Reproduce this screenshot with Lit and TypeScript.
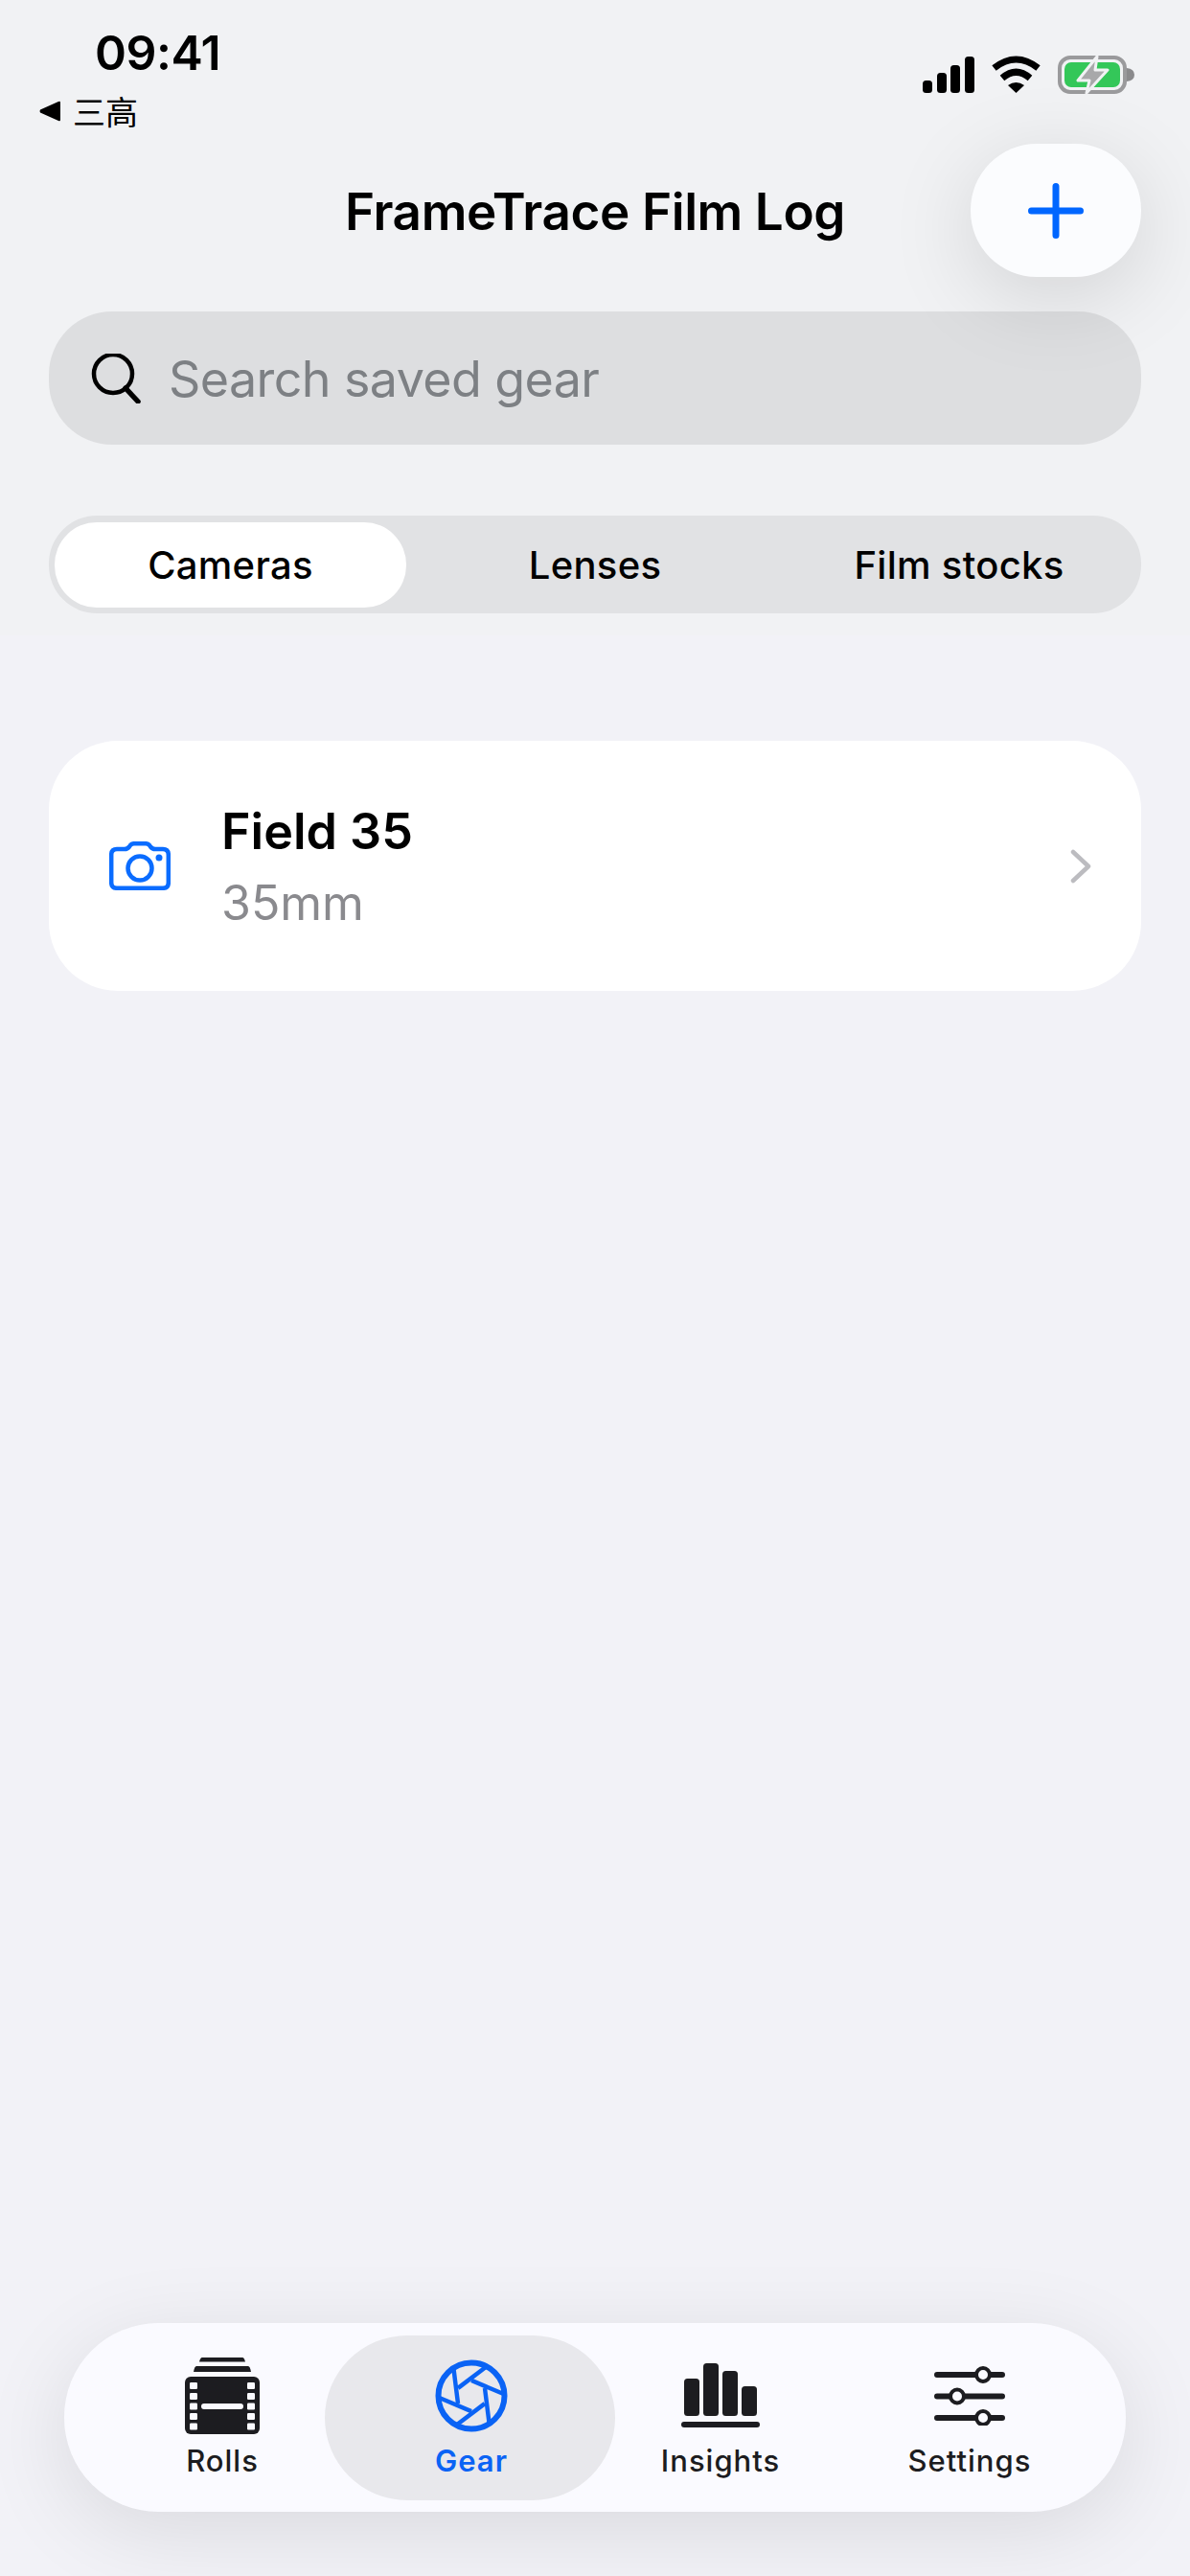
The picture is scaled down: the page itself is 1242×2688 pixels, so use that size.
import { LitElement, html, svg, css } from "lit";
import { customElement } from "lit/decorators.js";

const rollsIcon = html`
  <svg width="78" height="80" viewBox="0 0 78 80">
    <path d="M18 0 H60 Q62 0 63 4.500 H15 Q16 0 18 0 Z" fill="#1c1c20" />
    <path d="M12 9 H66 Q68 9 69 15 H9 Q10 9 12 9 Z" fill="#1c1c20" />
    <rect x="0" y="20" width="78" height="60" rx="6" fill="#1c1c20" />
    ${[26, 37, 47.5, 58, 68.5].map(
      (y) => svg`
        <rect x="5" y="${y}" width="8" height="7" rx="1.2" fill="#fafaff" />
        <rect x="65" y="${y}" width="8" height="7" rx="1.2" fill="#fafaff" />
      `
    )}
    <rect x="17" y="48" width="44" height="6" rx="3" fill="#fafaff" />
  </svg>
`;

const gearIcon = html`
  <svg width="76" height="76" viewBox="-38 -38 76 76" fill="none" stroke="#0a63f5">
    <circle r="34.500" stroke-width="6" />
    ${[0, 60, 120, 180, 240, 300].map(
      (a) => svg`
        <line x1="-18.500" y1="-28" x2="-14" y2="8" stroke-width="4.500" transform="rotate(${a})" />
      `
    )}
  </svg>
`;

const insightsIcon = html`
  <svg width="82" height="67" viewBox="0 0 82 67" fill="#1c1c20">
    <rect x="3" y="16" width="16" height="39" rx="3.500" />
    <rect x="23" y="0" width="16" height="55" rx="3.500" />
    <rect x="43" y="8" width="16" height="47" rx="3.500" />
    <rect x="63" y="24" width="16" height="31" rx="3.500" />
    <rect x="0" y="61" width="82" height="6" rx="3" />
  </svg>
`;

const settingsIcon = html`
  <svg width="74" height="62" viewBox="0 0 74 62" fill="none" stroke="#1c1c20" stroke-linecap="round">
    <path d="M3 9 H71 M3 31.500 H71 M3 54 H71" stroke-width="6" />
    <circle cx="51" cy="9" r="7" stroke-width="4" fill="#fafaff" />
    <circle cx="24" cy="31.500" r="7" stroke-width="4" fill="#fafaff" />
    <circle cx="51" cy="54" r="7" stroke-width="4" fill="#fafaff" />
  </svg>
`;

const tabs = [
  { label: "Rolls", icon: rollsIcon },
  { label: "Gear", icon: gearIcon, active: true },
  { label: "Insights", icon: insightsIcon },
  { label: "Settings", icon: settingsIcon },
];

@customElement("app-root")
export class AppRoot extends LitElement {
  static styles = css`
    :host {
      display: block;
      font-family: Inter, "Noto Sans CJK SC", sans-serif;
      color: #000;
    }

    .page {
      height: 2688px;
      display: flex;
      flex-direction: column;
      background: #f2f2f7;
      overflow: hidden;
    }

    .top {
      background: #f1f2f4;
      padding-bottom: 23px;
    }

    /* status bar */
    .status {
      height: 150px;
      display: flex;
      justify-content: space-between;
      padding: 0 58px 0 41px;
    }

    .clock {
      display: flex;
      flex-direction: column;
    }

    .time {
      margin: 29px 0 0 58px;
      font-size: 50px;
      line-height: 52px;
      font-weight: 600;
      letter-spacing: -0.5px;
    }

    .back {
      display: flex;
      align-items: center;
      gap: 13px;
      margin-top: 17px;
      font-family: "Noto Sans CJK SC", sans-serif;
      font-size: 34px;
      line-height: 36px;
    }

    .signals {
      display: flex;
      align-items: flex-start;
      gap: 18px;
      padding-top: 58px;
    }

    /* title row */
    .title-row {
      display: grid;
      grid-template-columns: 1fr auto 1fr;
      align-items: center;
      padding: 0 51px;
    }

    h1 {
      margin: 2px 0 0;
      font-size: 53px;
      line-height: 60px;
      font-weight: 600;
      letter-spacing: -0.4px;
    }

    .add {
      grid-column: 3;
      justify-self: end;
      width: 178px;
      height: 139px;
      display: flex;
      align-items: center;
      justify-content: center;
      border-radius: 69px;
      background: #fbfcfe;
      box-shadow: 0 20px 90px rgba(0, 0, 0, 0.13);
    }

    /* search */
    .search {
      height: 139px;
      margin: 36px 51px 0;
      padding-left: 44px;
      display: flex;
      align-items: center;
      gap: 29px;
      border-radius: 66px;
      background: #dddee0;
      font-size: 52px;
      letter-spacing: -0.6px;
      color: #7d8084;
    }

    .search span {
      padding-top: 2px;
    }

    /* segmented control */
    .segments {
      height: 102px;
      margin: 74px 51px 0;
      display: grid;
      grid-template-columns: repeat(3, 1fr);
      border-radius: 50px;
      background: #e1e2e4;
      font-size: 40px;
      font-weight: 450;
      letter-spacing: 0.3px;
    }

    .segment {
      display: flex;
      align-items: center;
      justify-content: center;
    }

    .segment.on {
      margin: 7px 7px 6px 6px;
      border-radius: 44px;
      background: #fff;
      font-weight: 500;
    }

    /* list */
    .list {
      flex: 1;
      padding: 110px 51px 0;
    }

    .card {
      height: 261px;
      display: flex;
      align-items: center;
      padding: 0 52px 0 63px;
      border-radius: 72px;
      background: #fff;
    }

    .card-text {
      flex: 1;
      margin-left: 53px;
    }

    .name {
      font-size: 52px;
      line-height: 62px;
      font-weight: 600;
    }

    .kind {
      margin-top: 14px;
      font-size: 50px;
      line-height: 58px;
      color: #8a8a8e;
    }

    /* bottom bar */
    .nav {
      height: 197px;
      margin: 0 67px 67px;
      padding: 0 33px 0 35px;
      display: grid;
      grid-template-columns: repeat(4, 260px);
      align-items: center;
      border-radius: 98px;
      background: #fafaff;
      box-shadow: 0 20px 90px rgba(0, 0, 0, 0.1);
    }

    .nav-item {
      height: 172px;
      display: flex;
      flex-direction: column;
      align-items: center;
      color: #1c1c20;
      font-size: 31px;
      font-weight: 450;
      letter-spacing: 1px;
    }

    .nav-item.on {
      margin: 0 -20px 0 -23px;
      padding-left: 3px;
      border-radius: 86px;
      background: #e8e8ec;
      color: #0a63f5;
      font-weight: 600;
    }

    .nav-icon {
      height: 80px;
      margin-top: 23px;
      display: flex;
      align-items: center;
      justify-content: center;
    }

    .nav-label {
      margin-top: 10px;
      line-height: 36px;
    }
  `;

  render() {
    return html`
      <div class="page">
        <div class="top">
          <div class="status">
            <div class="clock">
              <div class="time">09:41</div>
              <div class="back">
                <svg width="22" height="22" viewBox="0 0 22 22">
                  <path d="M20 1 Q22 0 22 2 V20 Q22 22 20 21 L1 12.500 Q0 11 1 9.500 Z" fill="#000" />
                </svg>
                <span>三高</span>
              </div>
            </div>
            <div class="signals">
              <svg width="54" height="39" viewBox="0 0 54 39" fill="#000">
                <rect x="0" y="26" width="10" height="13" rx="3.500" />
                <rect x="15" y="18" width="10" height="21" rx="3.500" />
                <rect x="29" y="10" width="10" height="29" rx="3.500" />
                <rect x="44" y="1" width="10" height="38" rx="3.500" />
              </svg>
              <svg width="51" height="39" viewBox="0 0 51 39">
                <path d="M2.500 13 Q25.500 -5 48.500 13" fill="none" stroke="#000" stroke-width="7" />
                <path d="M11 23.500 Q25.500 11 40 23.500" fill="none" stroke="#000" stroke-width="7" />
                <path d="M17 31 Q25.500 25 34 31 L25.500 39 Z" fill="#000" />
              </svg>
              <svg width="80" height="40" viewBox="0 0 80 40">
                <rect x="2" y="2" width="68" height="36" rx="11" fill="none" stroke="#9a9a9c" stroke-width="4" />
                <rect x="7" y="7" width="58" height="26" rx="7" fill="#34c759" />
                <path d="M72 13 Q80 14 80 20 Q80 26 72 27 Z" fill="#8a8a8c" />
                <path
                  d="M41 1 L21 26 H33 L30 39 L52 15 H39 Z"
                  fill="#a8a8aa"
                  stroke="#f1f2f4"
                  stroke-width="3"
                  stroke-linejoin="round"
                />
              </svg>
            </div>
          </div>

          <div class="title-row">
            <span></span>
            <h1>FrameTrace Film Log</h1>
            <div class="add">
              <svg width="58" height="58" viewBox="0 0 58 58">
                <path d="M29 3.500 V54.500 M3.500 29 H54.500" fill="none" stroke="#0066ff" stroke-width="7" stroke-linecap="round" />
              </svg>
            </div>
          </div>

          <div class="search">
            <svg width="52" height="52" viewBox="0 0 52 52" fill="none" stroke="#000">
              <circle cx="23" cy="21" r="20" stroke-width="4.500" />
              <path d="M36 36 L49 50" stroke-width="5.500" stroke-linecap="round" />
            </svg>
            <span>Search saved gear</span>
          </div>

          <div class="segments">
            <div class="segment on">Cameras</div>
            <div class="segment">Lenses</div>
            <div class="segment">Film stocks</div>
          </div>
        </div>

        <div class="list">
          <div class="card">
            <svg width="64" height="51" viewBox="0 0 64 51" fill="none" stroke="#0a6cff" stroke-width="4.500">
              <path
                d="M8 8 H16 Q19 8 21 5.500 L22 4 Q23.500 2.200 26 2.200 H38 Q40.500 2.200 42 4 L43 5.500 Q45 8 48 8 H56 Q61.800 8 61.800 14 V43 Q61.800 48.800 56 48.800 H8 Q2.200 48.800 2.200 43 V14 Q2.200 8 8 8 Z"
              />
              <circle cx="32" cy="28" r="12.500" />
              <circle cx="52" cy="17" r="3.500" fill="#0a6cff" stroke="none" />
            </svg>
            <div class="card-text">
              <div class="name">Field 35</div>
              <div class="kind">35mm</div>
            </div>
            <svg width="22" height="36" viewBox="0 0 22 36" fill="none">
              <path d="M3 3 L19 18 L3 33" stroke="#bcbcc0" stroke-width="4.500" stroke-linecap="round" stroke-linejoin="round" />
            </svg>
          </div>
        </div>

        <div class="nav">
          ${tabs.map(
            (t) => html`
              <div class="nav-item ${t.active ? "on" : ""}">
                <div class="nav-icon">${t.icon}</div>
                <div class="nav-label">${t.label}</div>
              </div>
            `
          )}
        </div>
      </div>
    `;
  }
}
